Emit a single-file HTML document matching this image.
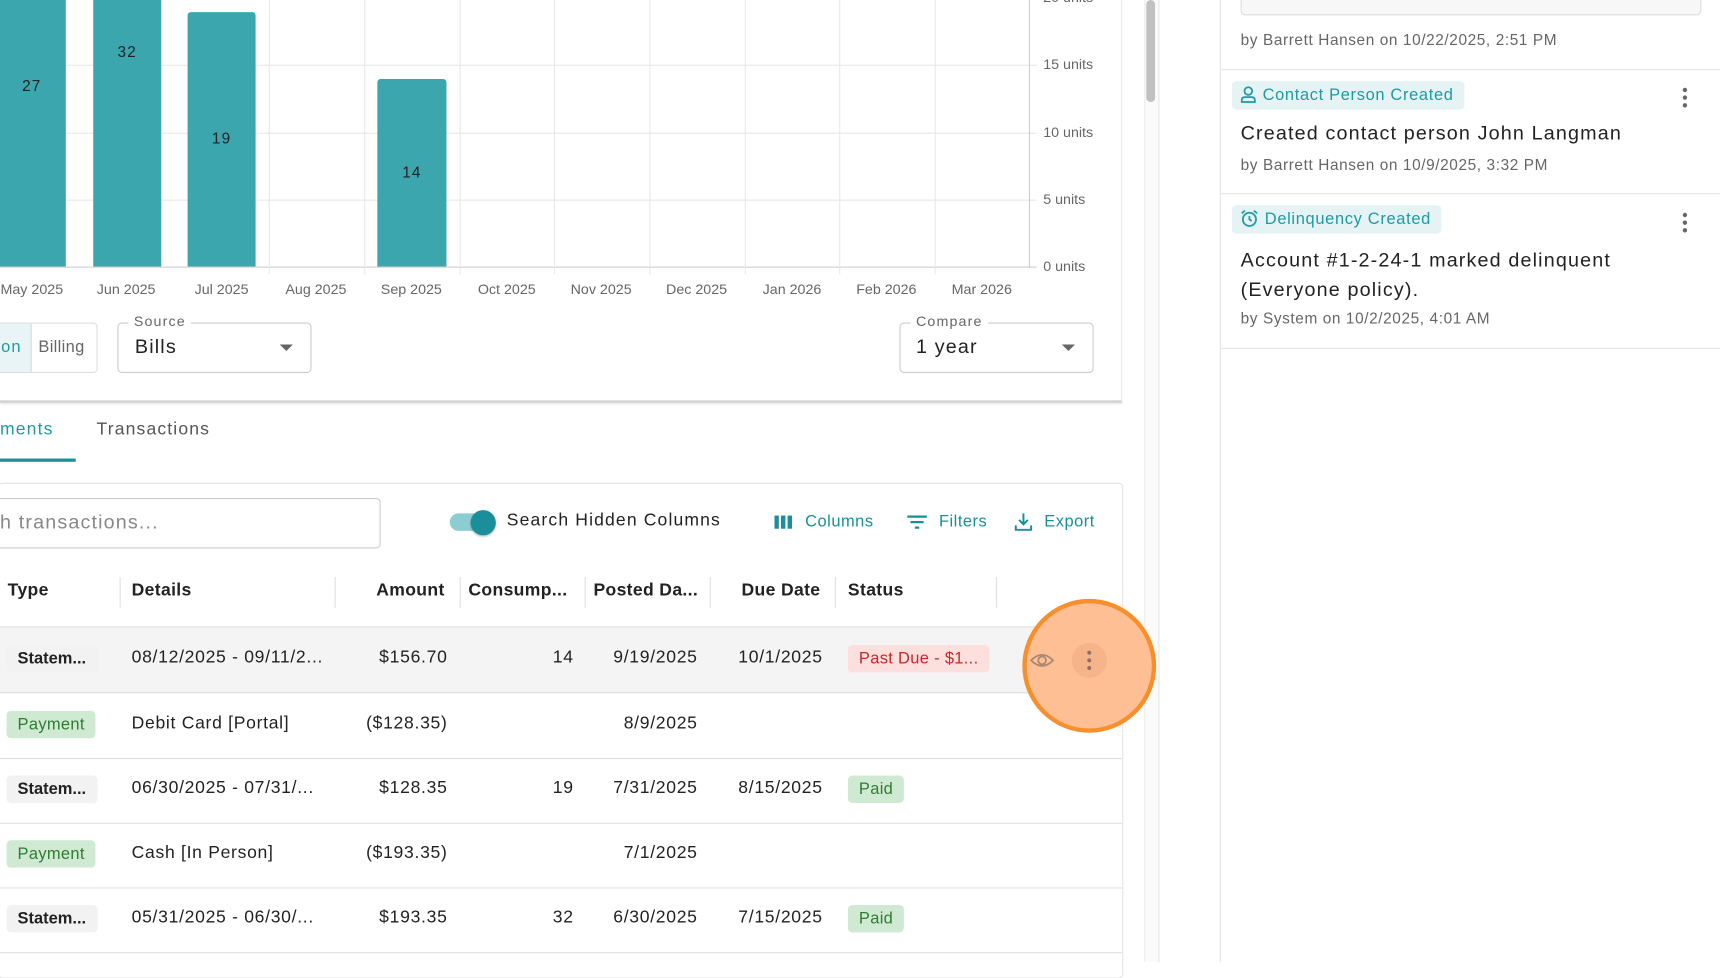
<!DOCTYPE html>
<html><head><meta charset="utf-8"><style>
html,body{margin:0;padding:0;width:1720px;height:962px;overflow:hidden;background:#fff}
#s{position:absolute;left:0;top:0;width:1568px;height:877px;transform:scale(1.09694);transform-origin:0 0;font-family:"Liberation Sans",sans-serif;color:#222;letter-spacing:.065em}
.a{position:absolute}
.gl{position:absolute;background:#e8e8e8}
.bar{position:absolute;background:#3ba6ae;border-radius:3px 3px 0 0;color:#222;font-size:14px;text-align:center}
.ml{position:absolute;top:256px;font-size:13px;color:#666;width:80px;text-align:center;letter-spacing:0}
.yl{position:absolute;left:951px;font-size:13px;color:#666;letter-spacing:0}
.th{position:absolute;top:530px;font-size:16px;color:#222;font-weight:bold;letter-spacing:.02em}
.sep{position:absolute;top:526px;width:1px;height:28px;background:#e0e0e0}
.row{position:absolute;left:0;width:1023px;height:59px;border-bottom:1px solid #e0e0e0}
.c{position:absolute;top:19px;font-size:16px;color:#222;white-space:nowrap;letter-spacing:.04em}
.r{text-align:right}
.chip{position:absolute;top:16px;left:6px;padding:4px 10px;border-radius:4px;font-size:15px;letter-spacing:.02em}
.st{background:#f2f2f2;color:#222;font-weight:bold;letter-spacing:0}
.pay{background:#cfe9d2;color:#2e7d32}
.paid{background:#cfe9d2;color:#2e7d32;left:773px}
.rp{position:absolute;left:1113px;width:455px}
.rchip{position:absolute;left:10px;height:26px;line-height:26px;padding:0 10px 0 8px;background:#e5f3f5;color:#1f9aa3;font-size:15px;border-radius:4px}
.dots{position:absolute;left:421px;width:4px}
.dots i{display:block;width:4px;height:4px;border-radius:2px;background:#666;margin-bottom:3px}
</style></head><body><div id="s">
<div class="gl" style="left:0;top:59px;width:945px;height:1px"></div>
<div class="gl" style="left:0;top:121px;width:945px;height:1px"></div>
<div class="gl" style="left:0;top:182px;width:945px;height:1px"></div>
<div class="gl" style="left:0;top:243px;width:945px;height:1px;background:#ccc"></div>
<div class="gl" style="left:245px;top:0;width:1px;height:250px"></div>
<div class="gl" style="left:332px;top:0;width:1px;height:250px"></div>
<div class="gl" style="left:419px;top:0;width:1px;height:250px"></div>
<div class="gl" style="left:505px;top:0;width:1px;height:250px"></div>
<div class="gl" style="left:592px;top:0;width:1px;height:250px"></div>
<div class="gl" style="left:679px;top:0;width:1px;height:250px"></div>
<div class="gl" style="left:765px;top:0;width:1px;height:250px"></div>
<div class="gl" style="left:852px;top:0;width:1px;height:250px"></div>
<div class="gl" style="left:938px;top:0;width:1px;height:244px;background:#ccc"></div>
<div class="bar" style="left:-2px;top:-90px;width:62px;height:333px"><span class="a" style="left:0;right:0;top:160px">27</span></div>
<div class="bar" style="left:85px;top:-150px;width:62px;height:393px"><span class="a" style="left:0;right:0;top:189px">32</span></div>
<div class="bar" style="left:171px;top:11px;width:62px;height:232px"><span class="a" style="left:0;right:0;top:107px">19</span></div>
<div class="bar" style="left:344px;top:72px;width:63px;height:171px"><span class="a" style="left:0;right:0;top:77px">14</span></div>
<div class="yl" style="top:-10px">20 units</div>
<div class="yl" style="top:51px">15 units</div>
<div class="yl" style="top:113px">10 units</div>
<div class="yl" style="top:174px">5 units</div>
<div class="yl" style="top:235px">0 units</div>
<div class="ml" style="left:-11px">May 2025</div><div class="ml" style="left:75px">Jun 2025</div><div class="ml" style="left:162px">Jul 2025</div><div class="ml" style="left:248px">Aug 2025</div><div class="ml" style="left:335px">Sep 2025</div><div class="ml" style="left:422px">Oct 2025</div><div class="ml" style="left:508px">Nov 2025</div><div class="ml" style="left:595px">Dec 2025</div><div class="ml" style="left:682px">Jan 2026</div><div class="ml" style="left:768px">Feb 2026</div><div class="ml" style="left:855px">Mar 2026</div>
<div class="a" style="left:-5px;top:294px;width:92px;height:44px;border:1px solid #ddd;border-radius:4px;overflow:hidden">
<div class="a" style="left:0;top:0;width:32px;height:44px;background:#e8f4f6;border-right:1px solid #ddd"></div>
<span class="a" style="left:5px;top:13px;font-size:15px;color:#1f9aa3">on</span>
<span class="a" style="left:39px;top:13px;font-size:15px;color:#666;letter-spacing:.02em">Billing</span></div>
<div class="a" style="left:107px;top:294px;width:175px;height:44px;border:1px solid #ccc;border-radius:4px"></div>
<div class="a" style="left:117px;top:285px;background:#fff;padding:0 5px;font-size:13px;color:#666">Source</div>
<div class="a" style="left:123px;top:306px;font-size:18px">Bills</div>
<div class="a" style="left:255px;top:314px;border:6px solid transparent;border-top:6px solid #666;border-bottom:0"></div>
<div class="a" style="left:820px;top:294px;width:175px;height:44px;border:1px solid #ccc;border-radius:4px"></div>
<div class="a" style="left:830px;top:285px;background:#fff;padding:0 5px;font-size:13px;color:#666">Compare</div>
<div class="a" style="left:835px;top:306px;font-size:18px">1 year</div>
<div class="a" style="left:968px;top:314px;border:6px solid transparent;border-top:6px solid #666;border-bottom:0"></div>
<div class="a" style="left:0;top:365px;width:1023px;height:2px;background:#d0d0d0;box-shadow:0 1px 2px rgba(0,0,0,.15)"></div>
<div class="a" style="left:1022px;top:0;width:1px;height:366px;background:#e6e6e6"></div>
<div class="a" style="left:0;top:383px;font-size:16px;color:#1f9aa3">ments</div>
<div class="a" style="left:88px;top:383px;font-size:16px;color:#555">Transactions</div>
<div class="a" style="left:0;top:418px;width:69px;height:3px;background:#1f8f99"></div>
<div class="a" style="left:-2px;top:440px;width:1024px;height:450px;border:1px solid #e3e3e3;border-radius:4px"></div>
<div class="a" style="left:-5px;top:454px;width:350px;height:44px;border:1px solid #ccc;border-radius:4px"></div>
<div class="a" style="left:0;top:466px;font-size:18px;color:#888">h transactions...</div>
<div class="a" style="left:410px;top:468px;width:36px;height:16px;border-radius:8px;background:#8ccdd2"></div>
<div class="a" style="left:429px;top:465px;width:23px;height:23px;border-radius:12px;background:#1a8f99;box-shadow:0 1px 2px rgba(0,0,0,.3)"></div>
<div class="a" style="left:462px;top:466px;font-size:16px;color:#222">Search Hidden Columns</div>
<svg class="a" style="left:706px;top:469px" width="17" height="14" viewBox="0 0 17 14"><rect x="0" y="1" width="4" height="12" fill="#1a8f99"/><rect x="6" y="1" width="4" height="12" fill="#1a8f99"/><rect x="12" y="1" width="4" height="12" fill="#1a8f99"/></svg>
<div class="a" style="left:734px;top:467px;font-size:15px;color:#1a8f99;letter-spacing:.03em">Columns</div>
<svg class="a" style="left:827px;top:469px" width="18" height="14" viewBox="0 0 18 14"><path d="M0 2h18M3 7h12M7 12h4" stroke="#1a8f99" stroke-width="2"/></svg>
<div class="a" style="left:856px;top:467px;font-size:15px;color:#1a8f99;letter-spacing:.03em">Filters</div>
<svg class="a" style="left:924px;top:467px" width="18" height="18" viewBox="0 0 18 18"><path d="M9 1v10M5 7l4 4 4-4M2 12v4h14v-4" stroke="#1a8f99" stroke-width="1.8" fill="none"/></svg>
<div class="a" style="left:952px;top:467px;font-size:15px;color:#1a8f99;letter-spacing:.03em">Export</div>
<div class="th" style="left:7px">Type</div>
<div class="sep" style="left:109px"></div><div class="th" style="left:120px">Details</div>
<div class="sep" style="left:305px"></div><div class="th" style="left:343px">Amount</div>
<div class="sep" style="left:419px"></div><div class="th" style="left:427px">Consump...</div>
<div class="sep" style="left:533px"></div><div class="th" style="left:541px">Posted Da...</div>
<div class="sep" style="left:647px"></div><div class="th" style="left:676px">Due Date</div>
<div class="sep" style="left:761px"></div><div class="th" style="left:773px">Status</div>
<div class="sep" style="left:908px"></div>
<div class="a" style="left:0;top:571px;width:1023px;height:1px;background:#e0e0e0"></div>
<div class="row" style="top:572px;background:#f4f4f4">
<span class="chip st">Statem...</span><span class="c" style="left:120px">08/12/2025 - 09/11/2...</span><span class="c r" style="right:615px">$156.70</span><span class="c r" style="right:500px">14</span><span class="c r" style="right:387px">9/19/2025</span><span class="c r" style="right:273px">10/1/2025</span><span class="chip" style="left:773px;background:#fde0de;color:#c62828">Past Due - $1...</span></div>
<div class="row" style="top:632px"><span class="chip pay">Payment</span><span class="c" style="left:120px">Debit Card [Portal]</span><span class="c r" style="right:615px">($128.35)</span><span class="c r" style="right:387px">8/9/2025</span></div>
<div class="row" style="top:691px"><span class="chip st">Statem...</span><span class="c" style="left:120px">06/30/2025 - 07/31/...</span><span class="c r" style="right:615px">$128.35</span><span class="c r" style="right:500px">19</span><span class="c r" style="right:387px">7/31/2025</span><span class="c r" style="right:273px">8/15/2025</span><span class="chip paid">Paid</span></div>
<div class="row" style="top:750px"><span class="chip pay">Payment</span><span class="c" style="left:120px">Cash [In Person]</span><span class="c r" style="right:615px">($193.35)</span><span class="c r" style="right:387px">7/1/2025</span></div>
<div class="row" style="top:809px"><span class="chip st">Statem...</span><span class="c" style="left:120px">05/31/2025 - 06/30/...</span><span class="c r" style="right:615px">$193.35</span><span class="c r" style="right:500px">32</span><span class="c r" style="right:387px">6/30/2025</span><span class="c r" style="right:273px">7/15/2025</span><span class="chip paid">Paid</span></div>
<div class="a" style="left:1043px;top:0;width:12px;height:877px;background:#fafafa;border-left:1px solid #eee;border-right:1px solid #e6e6e6"></div>
<div class="a" style="left:1045px;top:0;width:8px;height:93px;border-radius:4px;background:#c1c1c1"></div>
<svg class="a" style="left:925px;top:540px;z-index:5" width="135" height="135" viewBox="0 0 135 135">
<circle cx="68" cy="67" r="59" fill="#ffbf94" stroke="#f7902c" stroke-width="4"/>
<path d="M15 62q10-10 20 0q-10 10-20 0z" fill="none" stroke="#a88870" stroke-width="1.6"/><circle cx="25" cy="62" r="3.5" fill="none" stroke="#a88870" stroke-width="1.6"/>
<circle cx="68" cy="62" r="16" fill="#f5b48a"/>
<circle cx="68" cy="55" r="1.8" fill="#907060"/><circle cx="68" cy="62" r="1.8" fill="#907060"/><circle cx="68" cy="69" r="1.8" fill="#907060"/>
</svg>
<div class="a" style="left:1112px;top:0;width:1px;height:877px;background:#e3e3e3"></div>
<div class="a" style="left:1131px;top:-10px;width:418px;height:22px;border:1px solid #ddd;border-radius:4px;background:#f7f7f7"></div>
<div class="a" style="left:1131px;top:28px;font-size:14px;color:#666;letter-spacing:.04em">by Barrett Hansen on 10/22/2025, 2:51 PM</div>
<div class="a" style="left:1113px;top:63px;width:455px;height:1px;background:#e3e3e3"></div>
<div class="rp" style="top:74px">
<div class="rchip" style="top:0;letter-spacing:.04em"><svg style="vertical-align:-3px;margin-right:6px" width="14" height="16" viewBox="0 0 14 16"><circle cx="7" cy="5" r="3.5" fill="none" stroke="#1f9aa3" stroke-width="1.6"/><path d="M1 15v-1.5q0-3 3-3h6q3 0 3 3V15z" fill="none" stroke="#1f9aa3" stroke-width="1.6"/></svg>Contact Person Created</div>
<div class="dots" style="top:6px"><i></i><i></i><i></i></div>
<div class="a" style="left:18px;top:37px;font-size:18px;color:#222;white-space:nowrap">Created contact person John Langman</div>
<div class="a" style="left:18px;top:68px;font-size:14px;color:#666;white-space:nowrap;letter-spacing:.04em">by Barrett Hansen on 10/9/2025, 3:32 PM</div>
</div>
<div class="a" style="left:1113px;top:176px;width:455px;height:1px;background:#e3e3e3"></div>
<div class="rp" style="top:187px">
<div class="rchip" style="top:0;letter-spacing:.04em"><svg style="vertical-align:-3px;margin-right:6px" width="16" height="16" viewBox="0 0 16 16"><circle cx="8" cy="9" r="6" fill="none" stroke="#1f9aa3" stroke-width="1.6"/><path d="M8 6v3l2 1.5M1 3.5l3-2.5M15 3.5l-3-2.5" fill="none" stroke="#1f9aa3" stroke-width="1.6"/></svg>Delinquency Created</div>
<div class="dots" style="top:7px"><i></i><i></i><i></i></div>
<div class="a" style="left:18px;top:37px;font-size:18px;color:#222;line-height:27px;width:370px">Account #1-2-24-1 marked delinquent (Everyone policy).</div>
<div class="a" style="left:18px;top:95px;font-size:14px;color:#666;white-space:nowrap;letter-spacing:.04em">by System on 10/2/2025, 4:01 AM</div>
</div>
<div class="a" style="left:1113px;top:317px;width:455px;height:1px;background:#e3e3e3"></div>
</div></body></html>
